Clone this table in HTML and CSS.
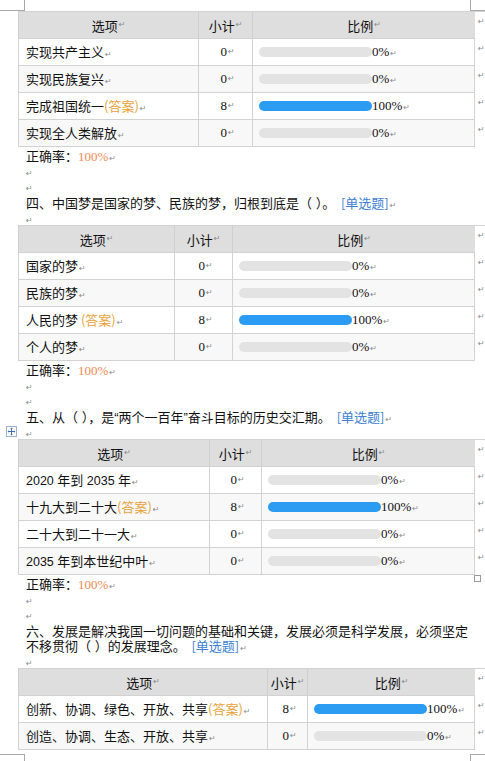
FILE: index.html
```html
<!DOCTYPE html>
<html lang="zh">
<head>
<meta charset="utf-8">
<title>答题统计</title>
<link rel="stylesheet" href="styles.css">
</head>
<body>
<div class="page">
  <span class="crop tl-h"></span><span class="crop tl-v"></span>
  <span class="crop tr-h"></span><span class="crop tr-v"></span>
  <span class="crop bl-h"></span><span class="crop bl-v"></span>
  <span class="crop br-h"></span><span class="crop br-v"></span>

  <div class="tbl t1">
    <div class="c h">选项<i class="pm">↵</i></div>
    <div class="c h">小计<i class="pm">↵</i></div>
    <div class="c h">比例<i class="pm">↵</i></div>
    <div class="m">↵</div>

    <div class="c l">实现共产主义<i class="pm">↵</i></div>
    <div class="c n">0<i class="pm">↵</i></div>
    <div class="c p"><span class="bar"></span><span class="pct">0%<i class="pm">↵</i></span></div>
    <div class="m">↵</div>

    <div class="c l alt">实现民族复兴<i class="pm">↵</i></div>
    <div class="c n alt">0<i class="pm">↵</i></div>
    <div class="c p alt"><span class="bar"></span><span class="pct">0%<i class="pm">↵</i></span></div>
    <div class="m">↵</div>

    <div class="c l">完成祖国统一<span class="ans">(答案)</span><i class="pm">↵</i></div>
    <div class="c n">8<i class="pm">↵</i></div>
    <div class="c p"><span class="bar full"></span><span class="pct">100%<i class="pm">↵</i></span></div>
    <div class="m">↵</div>

    <div class="c l alt">实现全人类解放<i class="pm">↵</i></div>
    <div class="c n alt">0<i class="pm">↵</i></div>
    <div class="c p alt"><span class="bar"></span><span class="pct">0%<i class="pm">↵</i></span></div>
    <div class="m">↵</div>
  </div>
  <p class="rate">正确率：<span class="rv">100%</span><i class="pm">↵</i></p>
  <p class="e"><i class="pm">↵</i></p>
  <p class="e"><i class="pm">↵</i></p>
  <p class="q">四、中国梦是国家的梦、民族的梦，归根到底是（<span class="lat"> </span>）。 &nbsp;<span class="type">[单选题]</span><i class="pm">↵</i></p>
  <p class="e"><i class="pm">↵</i></p>

  <div class="tbl t2">
    <div class="c h">选项<i class="pm">↵</i></div>
    <div class="c h">小计<i class="pm">↵</i></div>
    <div class="c h">比例<i class="pm">↵</i></div>
    <div class="m">↵</div>

    <div class="c l">国家的梦<i class="pm">↵</i></div>
    <div class="c n">0<i class="pm">↵</i></div>
    <div class="c p"><span class="bar"></span><span class="pct">0%<i class="pm">↵</i></span></div>
    <div class="m">↵</div>

    <div class="c l alt">民族的梦<i class="pm">↵</i></div>
    <div class="c n alt">0<i class="pm">↵</i></div>
    <div class="c p alt"><span class="bar"></span><span class="pct">0%<i class="pm">↵</i></span></div>
    <div class="m">↵</div>

    <div class="c l">人民的梦 <span class="ans">(答案)</span><i class="pm">↵</i></div>
    <div class="c n">8<i class="pm">↵</i></div>
    <div class="c p"><span class="bar full"></span><span class="pct">100%<i class="pm">↵</i></span></div>
    <div class="m">↵</div>

    <div class="c l alt">个人的梦<i class="pm">↵</i></div>
    <div class="c n alt">0<i class="pm">↵</i></div>
    <div class="c p alt"><span class="bar"></span><span class="pct">0%<i class="pm">↵</i></span></div>
    <div class="m">↵</div>
  </div>
  <p class="rate">正确率：<span class="rv">100%</span><i class="pm">↵</i></p>
  <p class="e"><i class="pm">↵</i></p>
  <p class="e"><i class="pm">↵</i></p>
  <p class="q">五、从（<span class="lat"> </span>），是<span class="lat">“</span>两个一百年<span class="lat">”</span>奋斗目标的历史交汇期。 &nbsp;<span class="type">[单选题]</span><i class="pm">↵</i></p>
  <p class="e anchor"><span class="move"><svg width="11" height="11" viewBox="0 0 11 11"><rect x="0.5" y="0.5" width="10" height="10" fill="#fff" stroke="#9bb3cf"/><path d="M5.5 2v7M2 5.5h7" stroke="#3c6fb0" stroke-width="1"/><path d="M5.5 1.6l-1.3 1.4h2.6zM5.5 9.4l-1.3-1.4h2.6zM1.6 5.5l1.4-1.3v2.6zM9.4 5.5l-1.4-1.3v2.6z" fill="#3c6fb0"/></svg></span><i class="pm">↵</i></p>

  <div class="tbl t3">
    <div class="c h">选项<i class="pm">↵</i></div>
    <div class="c h">小计<i class="pm">↵</i></div>
    <div class="c h">比例<i class="pm">↵</i></div>
    <div class="m">↵</div>

    <div class="c l"><span class="sn">2020 </span>年到<span class="sn"> 2035 </span>年<i class="pm">↵</i></div>
    <div class="c n">0<i class="pm">↵</i></div>
    <div class="c p"><span class="bar"></span><span class="pct">0%<i class="pm">↵</i></span></div>
    <div class="m">↵</div>

    <div class="c l alt">十九大到二十大<span class="ans">(答案)</span><i class="pm">↵</i></div>
    <div class="c n alt">8<i class="pm">↵</i></div>
    <div class="c p alt"><span class="bar full"></span><span class="pct">100%<i class="pm">↵</i></span></div>
    <div class="m">↵</div>

    <div class="c l">二十大到二十一大<i class="pm">↵</i></div>
    <div class="c n">0<i class="pm">↵</i></div>
    <div class="c p"><span class="bar"></span><span class="pct">0%<i class="pm">↵</i></span></div>
    <div class="m">↵</div>

    <div class="c l alt"><span class="sn">2035 </span>年到本世纪中叶<i class="pm">↵</i></div>
    <div class="c n alt">0<i class="pm">↵</i></div>
    <div class="c p alt"><span class="bar"></span><span class="pct">0%<i class="pm">↵</i></span></div>
    <div class="m">↵</div>
    <span class="handle"></span>
  </div>
  <p class="rate">正确率：<span class="rv">100%</span><i class="pm">↵</i></p>
  <p class="e"><i class="pm">↵</i></p>
  <p class="e"><i class="pm">↵</i></p>
  <p class="q two">六、发展是解决我国一切问题的基础和关键，发展必须是科学发展，必须坚定<br>不移贯彻（<span class="lat"> </span>）的发展理念。 &nbsp;<span class="type">[单选题]</span><i class="pm">↵</i></p>
  <p class="e"><i class="pm">↵</i></p>

  <div class="tbl t4">
    <div class="c h">选项<i class="pm">↵</i></div>
    <div class="c h">小计<i class="pm">↵</i></div>
    <div class="c h">比例<i class="pm">↵</i></div>
    <div class="m">↵</div>

    <div class="c l">创新、协调、绿色、开放、共享<span class="ans">(答案)</span><i class="pm">↵</i></div>
    <div class="c n">8<i class="pm">↵</i></div>
    <div class="c p"><span class="bar full"></span><span class="pct">100%<i class="pm">↵</i></span></div>
    <div class="m">↵</div>

    <div class="c l alt">创造、协调、生态、开放、共享<i class="pm">↵</i></div>
    <div class="c n alt">0<i class="pm">↵</i></div>
    <div class="c p alt"><span class="bar"></span><span class="pct">0%<i class="pm">↵</i></span></div>
    <div class="m">↵</div>
  </div>
</div>
</body>
</html>
```

FILE: styles.css
```css
html, body {
  margin: 0;
  padding: 0;
  background: #fff;
}

.page {
  position: relative;
  width: 485px;
  height: 761px;
  overflow: hidden;
  box-sizing: border-box;
  padding: 11px 0 0 18px;
  font-family: "Noto Sans CJK SC", "Noto Sans", sans-serif;
  font-size: 13px;
  color: #111;
}

/* crop marks of the Word page */
.crop {
  position: absolute;
  background: #a8a8a8;
}
.tl-h { left: 0; top: 10px; width: 25px; height: 1px; }
.tl-v { left: 24px; top: 0; width: 1px; height: 10px; }
.tr-h { left: 470px; top: 10px; width: 15px; height: 1px; }
.tr-v { left: 470px; top: 0; width: 1px; height: 10px; }
.bl-h { left: 0; top: 754px; width: 25px; height: 1px; }
.bl-v { left: 24px; top: 754px; width: 1px; height: 7px; }
.br-h { left: 470px; top: 754px; width: 15px; height: 1px; }
.br-v { left: 470px; top: 754px; width: 1px; height: 7px; }

/* paragraph marks */
.pm {
  font-style: normal;
  font-family: "DejaVu Sans", sans-serif;
  font-size: 8px;
  line-height: 1;
  color: #8a8a8a;
  margin-left: 1px;
}

p {
  margin: 0;
  padding-left: 8px;
  line-height: 15px;
  height: 15px;
  overflow: visible;
  white-space: nowrap;
}
p.rate { margin-top: 1px; }
p.q { margin-top: 2px; }
p.q.two { height: 30px; }
p.e .pm { margin-left: 0; }
.anchor { position: relative; }
.move {
  position: absolute;
  left: -12px;
  top: 2px;
  width: 11px;
  height: 11px;
  line-height: 0;
}

.lat { font-family: "Liberation Sans", sans-serif; line-height: 1; }
.rv {
  font-family: "Liberation Serif", serif;
  font-size: 13px;
  line-height: 1;
  color: #f28a52;
}
.type { color: #3d7fd3; }
.ans { color: #e8a23a; }
.sn {
  font-family: "Liberation Sans", sans-serif;
  font-size: 12.5px;
  white-space: pre;
}

/* tables */
.tbl {
  position: relative;
  display: grid;
  border-top: 1px solid #d2d2d2;
}
.t1 { grid-template-columns: 180px 54px 223px 10px; }
.t2 { grid-template-columns: 156px 58px 243px 10px; }
.t3 { grid-template-columns: 191px 52px 214px 10px; }
.t4 { grid-template-columns: 249px 40px 168px 10px; }

.c {
  box-sizing: border-box;
  height: 27px;
  border-left: 1px solid #d2d2d2;
  border-bottom: 1px solid #d2d2d2;
  display: flex;
  align-items: center;
  white-space: nowrap;
  background: #fff;
}
.c.l {
  display: block;
  line-height: 26px;
  padding-left: 7px;
}
.c.p { border-right: 1px solid #d2d2d2; }
.c.alt { background: #f8f8f8; }
.c.h {
  background: #dedede;
  justify-content: center;
  border-left-color: #cfcfcf;
}
.c.n {
  justify-content: center;
  font-family: "Liberation Serif", serif;
  font-size: 13px;
  padding-left: 4px;
}
.c.p { padding-left: 6px; }

.bar {
  display: block;
  width: 113px;
  height: 10px;
  border-radius: 5px;
  background: #e3e3e3;
  flex: none;
}
.bar.full { background: #2c9bf2; }
.pct {
  font-family: "Liberation Serif", serif;
  font-size: 13px;
}

.m {
  font-family: "DejaVu Sans", sans-serif;
  font-size: 8px;
  color: #8a8a8a;
  padding: 5px 0 0 3px;
  line-height: 10px;
}

.handle {
  position: absolute;
  right: 4px;
  bottom: -7px;
  width: 5px;
  height: 5px;
  border: 1px solid #9a9a9a;
  background: #fff;
}
```
